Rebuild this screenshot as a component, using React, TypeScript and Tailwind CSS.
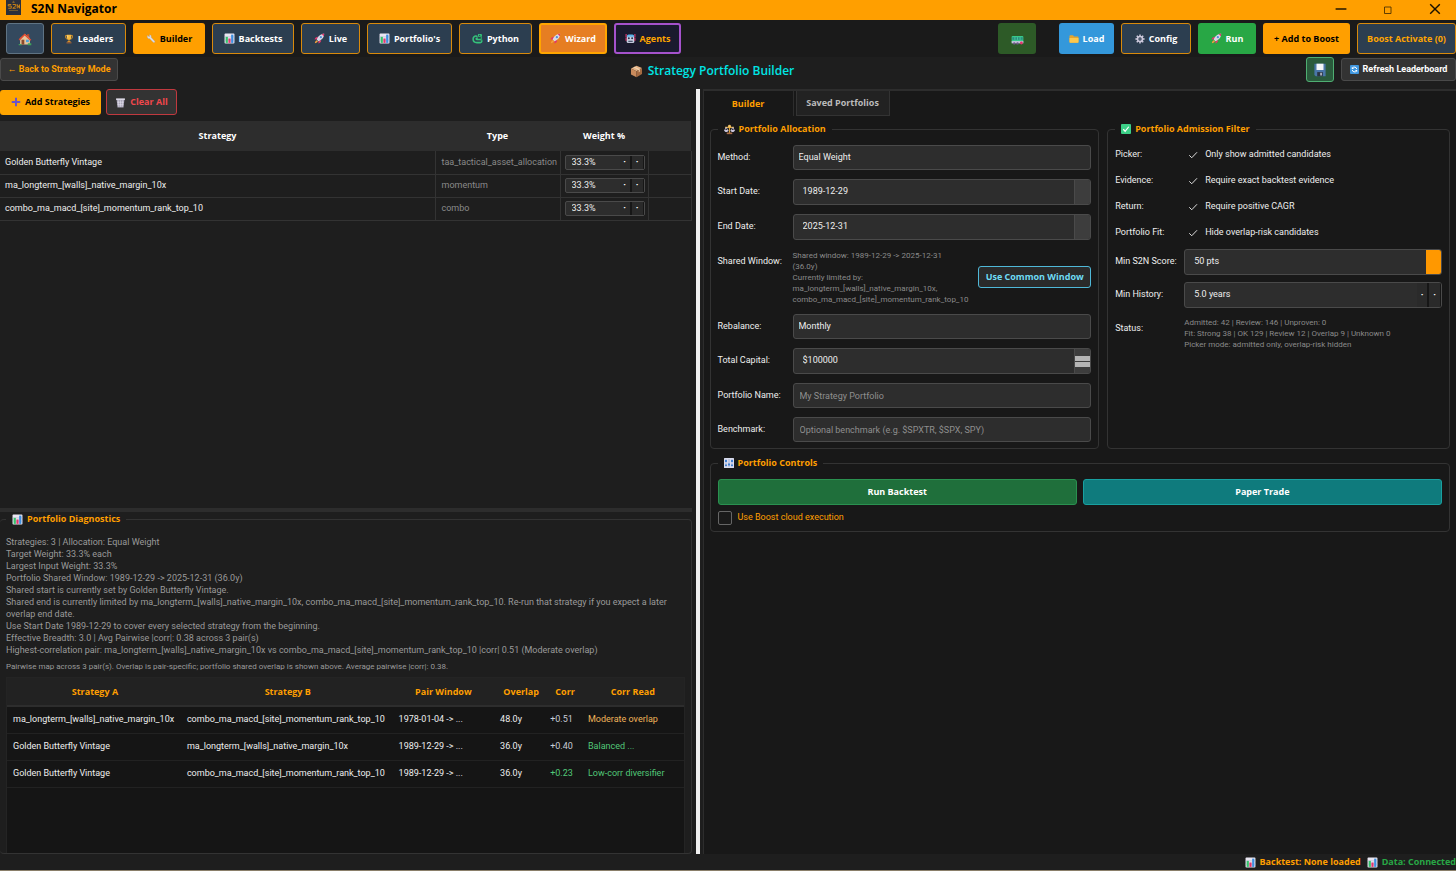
import React, { useState } from "react";
import clsx from "clsx";

interface IIcon {
    className?: string;
}

const Svg = ({ className = "size-[11px]", children }: { className?: string; children: React.ReactNode }) => (
    <svg viewBox="0 0 20 20" className={clsx("shrink-0", className)} fill="none" aria-hidden="true">
        {children}
    </svg>
);

const LogoIcon = () => (
    <Svg className="h-[15px] w-[15px]">
        <rect width="20" height="20" fill="#2b2f3a" />
        <path d="M3 6h4M3 6v2h4v3H3M9 6h4v2l-4 3h4M15 11V6l3 5V6" stroke="#c98317" strokeWidth="1.3" />
        <path d="M10 1v3M8 3h4M4 14h12" stroke="#8b6a2c" />
    </Svg>
);

const HouseIcon = () => (
    <Svg className="size-[14px]">
        <path d="M13 3h3v5h-3z" fill="#b4472f" />
        <path d="M3 9l7-6 7 6v9H3z" fill="#e8c49a" />
        <path d="M1 10.500L9.500 2l9.500 9-1.500 1.500L9.500 5 2.500 12z" fill="#e0492f" />
        <path d="M5 11h4v7H5z" fill="#8a4b2c" />
        <path d="M11.500 11h4v3.500h-4z" fill="#4aa3e0" />
        <path d="M1 17h4v2H1zM14 16h5v3h-5z" fill="#3fa35b" />
    </Svg>
);

const TrophyIcon = () => (
    <Svg className="size-[10px]">
        <path d="M3 3h14v3c0 3-2 4-4 4H7C5 10 3 9 3 6z" stroke="#c98a2a" strokeWidth="1.800" />
        <path d="M5.500 1.500h9V7c0 3-2 5-4.500 5S5.500 10 5.500 7z" fill="#f5b93d" />
        <path d="M9 11h2v3h2v2H7v-2h2z" fill="#d9902a" />
        <path d="M5 16h10v3H5z" fill="#8a5a3a" />
        <path d="M7.500 3v4" stroke="#ffe3a0" strokeWidth="1.500" />
    </Svg>
);

const WrenchIcon = () => (
    <Svg className="size-[10px]">
        <path
            d="M3 2.500l3 3 1.500-1-1-3c2-.5 4 1 4 3.500l-.3 1.300 7.300 8c1 1.700-1.200 3.700-2.700 2.500L7 9.200C4 9.700 1.500 7 3 2.500z"
            fill="#dcdde6"
            stroke="#9a9dac"
            strokeWidth=".6"
        />
    </Svg>
);

const ChartIcon = () => (
    <Svg>
        <rect x="1" y="1" width="18" height="18" rx="1.500" fill="#e9e6f2" />
        <path d="M1 7h18M1 13h18" stroke="#b8b2cc" />
        <path d="M3 7h4v11H3z" fill="#35c26b" />
        <path d="M8 10h4v8H8z" fill="#e2366d" />
        <path d="M13 3h4v15h-4z" fill="#3d8fe0" />
    </Svg>
);

const RocketIcon = () => (
    <Svg>
        <path d="M7 7C4 7 2 9 1 12l5-.5zM13 13c0 3-2 5-5 6l.5-5z" fill="#e2366d" />
        <path d="M5 13c-2 .5-3 3-3.500 5.500C4 18 6.500 17 7 15z" fill="#f5a13d" />
        <path d="M5 12C7 6 12 1.500 18.500 1.500 18.500 8 14 13 8 15z" fill="#d9d7e6" />
        <path d="M14 2.200c1.500-.5 3-.7 4.500-.7 0 1.500-.2 3-.7 4.500z" fill="#e2366d" />
        <circle cx="12.500" cy="7.500" r="2" fill="#4b8fd6" />
    </Svg>
);

const SnakeIcon = () => (
    <Svg>
        <path
            d="M9 6C5 4.500 2 7 2 11c0 4 3 6.500 7 6.500h6c3.500 0 4-5 .5-5.500H9.500c-2.500 0-2.500-3 0-3"
            stroke="#35c27b"
            strokeWidth="2.800"
            strokeLinecap="round"
        />
        <path d="M11 2h5c3 0 3 5 0 5h-5z" fill="#35c27b" />
        <circle cx="14" cy="4" r="1" fill="#112233" />
        <path d="M17 5v9" stroke="#2a9d63" strokeWidth="2.400" />
    </Svg>
);

const RobotIcon = () => (
    <Svg>
        <path d="M2 2v6M18 2v6" stroke="#e2366d" strokeWidth="2" />
        <rect x="3.500" y="2.500" width="13" height="7" rx="3" fill="#5db5ea" />
        <rect x="3" y="7" width="14" height="11" rx="2" fill="#c9cfe2" />
        <path d="M1 9h2v5H1zM17 9h2v5h-2z" fill="#e2366d" />
        <circle cx="7" cy="9.500" r="1.800" fill="#22304d" />
        <circle cx="13" cy="9.500" r="1.800" fill="#22304d" />
        <path d="M6 14h8v2.500H6z" fill="#4a5672" />
    </Svg>
);

const BusIcon = () => (
    <Svg className="size-[13px]">
        <rect x="1" y="6" width="18" height="11" rx="1.500" fill="#37c98b" />
        <path d="M2 8h16v4H2z" fill="#2a8f80" />
        <path d="M6 8v4M10 8v4M14 8v4" stroke="#59e3ab" />
        <path d="M1 14h18v3.500H1z" fill="#c8c3dd" />
        <circle cx="5" cy="17.500" r="1.800" fill="#6e5a8c" />
        <circle cx="10" cy="17.500" r="1.800" fill="#6e5a8c" />
        <circle cx="16" cy="17" r="2.200" fill="#e2366d" />
    </Svg>
);

const FolderIcon = () => (
    <Svg className="size-[10px]">
        <path d="M1 4c0-1 .5-1.500 1.500-1.500H8l2 2.500h7.500c1 0 1.500.5 1.500 1.500V16c0 1-.5 1.500-1.500 1.500h-15C1.500 17.500 1 17 1 16z" fill="#e5a52e" />
        <path d="M1 8h18v8c0 1-.5 1.500-1.500 1.500h-15C1.500 17.500 1 17 1 16z" fill="#fcc84e" />
    </Svg>
);

const GearIcon = () => (
    <Svg className="size-[10px]">
        <circle cx="10" cy="10" r="5" stroke="#cdc9dc" strokeWidth="3.400" />
        <path
            d="M10 .8v4M10 15.200v4M.8 10h4M15.200 10h4M3.500 3.500l2.800 2.800M13.700 13.700l2.800 2.800M16.500 3.500l-2.800 2.800M6.300 13.700l-2.800 2.800"
            stroke="#cdc9dc"
            strokeWidth="3"
        />
        <circle cx="10" cy="10" r="1.500" fill="#8b86a3" />
    </Svg>
);

const FloppyIcon = () => (
    <Svg className="size-[14px]">
        <path d="M2 1h16v18H4l-2-2z" fill="#4a76a8" />
        <path d="M5 1h10v9H5z" fill="#f2f4f8" />
        <path d="M6 13h8v6H6z" fill="#2b3442" />
        <path d="M10.500 14h2v4h-2z" fill="#cfd6e0" />
    </Svg>
);

const RefreshIcon = () => (
    <Svg className="size-[9px]">
        <rect width="20" height="20" rx="2" fill="#3f97e0" />
        <path d="M15 9a5.200 5.200 0 0 0-9.500-2M5 11a5.200 5.200 0 0 0 9.500 2" stroke="#fff" strokeWidth="2.200" />
        <path d="M4 4v5h5zM16 16v-5h-5z" fill="#fff" />
    </Svg>
);

const PackageIcon = () => (
    <Svg className="size-[13px]">
        <path d="M1.500 5.500L10 1l8.500 3.500-8.500 5z" fill="#e3b184" />
        <path d="M1.500 5.500L10 9.500V19l-8.500-4.500z" fill="#c98b5c" />
        <path d="M18.500 4.500V14L10 19V9.500z" fill="#a66b42" />
        <path d="M5 3.500l8.500 4V11l1.500-1V6.500l-7.500-4z" fill="#f1d6b4" />
    </Svg>
);

const ScalesIcon = () => (
    <Svg>
        <path d="M10 2v15M2 6h16" stroke="#d9a441" strokeWidth="2.200" />
        <circle cx="10" cy="4" r="2.600" fill="#f0c060" />
        <path d="M4 6l-3 6M4 6l3 6M16 6l-3 6M16 6l3 6" stroke="#c9c4dc" strokeWidth="1.600" />
        <path d="M.5 11h7.500c0 5-7.500 5-7.500 0zM12 11h7.500c0 5-7.500 5-7.500 0z" fill="#c9c4dc" />
        <path d="M5 15.500h10v3H5z" fill="#a86c48" />
    </Svg>
);

const DoneIcon = () => (
    <Svg className="size-[10px]">
        <rect width="20" height="20" rx="2" fill="#3ccf87" />
        <path d="M4.500 10.500l3.800 4 7.200-9" stroke="#fff" strokeWidth="2.400" />
    </Svg>
);

const KnobsIcon = () => (
    <Svg className="size-[10px]">
        <rect width="20" height="20" rx="1" fill="#d7dcee" />
        <path d="M4 2v16M10 2v16M16 2v16" stroke="#8d9ac2" strokeWidth="1.200" />
        <path d="M2 4h4v4H2zM8 11h4v4H8zM14 4h4v4h-4zM2 13h4v3H2zM14 13h4v3h-4z" fill="#3f7fd0" />
    </Svg>
);

const PlusIcon = () => (
    <Svg className="size-[10px]">
        <path d="M10 1.500v17M1.500 10h17" stroke="#6a54c8" strokeWidth="4" />
    </Svg>
);

const TrashIcon = () => (
    <Svg>
        <path d="M2 2.500h16v3H2z" fill="#dcd9e6" />
        <path d="M3 5.500h14L15.500 19h-11z" fill="#a9a5b8" />
        <path d="M6 6l1 12M10 6v12M14 6l-1 12M4 9.500h12M4.500 14h11" stroke="#e8e6f0" />
    </Svg>
);

const TickIcon = ({ className }: IIcon) => (
    <Svg className={className}>
        <path d="M2.500 10.500l5 5L18 4.500" stroke="#f2f2f2" strokeWidth="1.800" />
    </Svg>
);

const STRONG = "font-['Open_Sans',sans-serif] text-[9px] font-bold";

const NAV_DEFAULT = "border border-[#d98a0b] bg-[#2c3e50] text-white";

const leftNav = [
    { label: "", name: "Home", icon: <HouseIcon />, width: "w-[38px]", tone: "border border-[#5f7383] bg-[#34495e] text-white" },
    { label: "Leaders", icon: <TrophyIcon />, width: "w-[75px]", tone: NAV_DEFAULT },
    { label: "Builder", icon: <WrenchIcon />, width: "w-[72px]", tone: "bg-[#ff9f00] text-black" },
    { label: "Backtests", icon: <ChartIcon />, width: "w-[82px]", tone: NAV_DEFAULT },
    { label: "Live", icon: <RocketIcon />, width: "w-[59px]", tone: NAV_DEFAULT },
    { label: "Portfolio's", icon: <ChartIcon />, width: "w-[85px]", tone: NAV_DEFAULT },
    { label: "Python", icon: <SnakeIcon />, width: "w-[73px]", tone: NAV_DEFAULT },
    { label: "Wizard", icon: <RocketIcon />, width: "w-[68px]", tone: "border-2 border-[#ffa500] bg-[#e67e22] text-white" },
    { label: "Agents", icon: <RobotIcon />, width: "w-[67px]", tone: "border-2 border-[#a552cc] bg-[#1a1a2e] text-[#ffa500]" },
];

const rightNav = [
    { label: "Load", icon: <FolderIcon />, width: "w-[55px]", tone: "bg-[#3498db] text-white" },
    { label: "Config", icon: <GearIcon />, width: "w-[70px]", tone: NAV_DEFAULT },
    { label: "Run", icon: <RocketIcon />, width: "w-[58px]", tone: "bg-[#28a745] text-white" },
    { label: "+ Add to Boost", icon: null, width: "w-[87px]", tone: "bg-[#ff9f00] text-black" },
    { label: "Boost Activate (0)", icon: null, width: "w-[99px]", tone: "border border-[#d98a0b] bg-[#2c3e50] text-[#ffa500]" },
];

const strategies = [
    { name: "Golden Butterfly Vintage", type: "taa_tactical_asset_allocation" },
    { name: "ma_longterm_[walls]_native_margin_10x", type: "momentum" },
    { name: "combo_ma_macd_[site]_momentum_rank_top_10", type: "combo" },
];

const diagnostics = [
    "Strategies: 3 | Allocation: Equal Weight",
    "Target Weight: 33.3% each",
    "Largest Input Weight: 33.3%",
    "Portfolio Shared Window: 1989-12-29 -> 2025-12-31 (36.0y)",
    "Shared start is currently set by Golden Butterfly Vintage.",
    "Shared end is currently limited by ma_longterm_[walls]_native_margin_10x, combo_ma_macd_[site]_momentum_rank_top_10. Re-run that strategy if you expect a later overlap end date.",
    "Use Start Date 1989-12-29 to cover every selected strategy from the beginning.",
    "Effective Breadth: 3.0 | Avg Pairwise |corr|: 0.38 across 3 pair(s)",
    "Highest-correlation pair: ma_longterm_[walls]_native_margin_10x vs combo_ma_macd_[site]_momentum_rank_top_10 |corr| 0.51 (Moderate overlap)",
];

const pairs = [
    {
        a: "ma_longterm_[walls]_native_margin_10x",
        b: "combo_ma_macd_[site]_momentum_rank_top_10",
        window: "1978-01-04 -> ...",
        overlap: "48.0y",
        corr: "+0.51",
        corrTone: "text-[#c8ccd6]",
        read: "Moderate overlap",
        readTone: "text-[#f0b45a]",
    },
    {
        a: "Golden Butterfly Vintage",
        b: "ma_longterm_[walls]_native_margin_10x",
        window: "1989-12-29 -> ...",
        overlap: "36.0y",
        corr: "+0.40",
        corrTone: "text-[#c8ccd6]",
        read: "Balanced ...",
        readTone: "text-[#52c878]",
    },
    {
        a: "Golden Butterfly Vintage",
        b: "combo_ma_macd_[site]_momentum_rank_top_10",
        window: "1989-12-29 -> ...",
        overlap: "36.0y",
        corr: "+0.23",
        corrTone: "text-[#52c878]",
        read: "Low-corr diversifier",
        readTone: "text-[#52c878]",
    },
];

const filters = [
    { id: "picker", label: "Picker:", text: "Only show admitted candidates" },
    { id: "evidence", label: "Evidence:", text: "Require exact backtest evidence" },
    { id: "return", label: "Return:", text: "Require positive CAGR" },
    { id: "fit", label: "Portfolio Fit:", text: "Hide overlap-risk candidates" },
];

interface INavButton {
    label: string;
    name?: string;
    icon: React.ReactNode;
    width: string;
    tone: string;
}

const NavButton = ({ label, name, icon, width, tone }: INavButton) => (
    <button
        type="button"
        aria-label={name}
        className={clsx("flex h-[31px] shrink-0 items-center justify-center gap-1 rounded-[3px] whitespace-nowrap", STRONG, width, tone)}
    >
        {icon}
        {label && <span>{label}</span>}
    </button>
);

const GroupBox = ({ title, icon, className, children }: { title: string; icon: React.ReactNode; className?: string; children: React.ReactNode }) => (
    <fieldset className={clsx("min-w-0 rounded-[4px] border border-[#333333]", className)}>
        <legend className={clsx("flex items-center gap-1 px-1.5 leading-[14px] text-[#ff9f00]", STRONG)}>
            {icon}
            {title}
        </legend>
        {children}
    </fieldset>
);

const FIELD = "w-full min-w-0 rounded-[3px] border border-[#4a4a4a] bg-[#2d2d2d] text-[#eeeeee] outline-none";

const StepDots = ({ name }: { name: string }) => (
    <>
        <button type="button" aria-label={`Decrease ${name}`} className="w-3 shrink-0 border-r-2 border-[#161616] bg-[#2a2a2a] leading-none font-bold text-white">
            ·
        </button>
        <button type="button" aria-label={`Increase ${name}`} className="w-3 shrink-0 border-r border-[#161616] bg-[#2a2a2a] leading-none font-bold text-white">
            ·
        </button>
    </>
);

const FormRow = ({ id, label, children }: { id: string; label: string; children: React.ReactNode }) => (
    <div className="flex">
        <label htmlFor={id} className="w-[75px] shrink-0 pt-[5px] leading-[14px] text-[#eeeeee]">
            {label}
        </label>
        <div className="min-w-0 flex-1">{children}</div>
    </div>
);

const DateField = ({ id, value }: { id: string; value: string }) => (
    <div className={clsx("flex h-[26px] overflow-hidden", FIELD)}>
        <input id={id} type="text" defaultValue={value} className="min-w-0 flex-1 pl-[9px] outline-none" />
        <button type="button" aria-label="Open calendar" className="w-4 border-l border-[#4a4a4a] bg-[#3d3d3d]" />
    </div>
);

const StrategyTable = () => (
    <table className="w-full table-fixed border-collapse">
        <colgroup>
            <col />
            <col className="w-[125px]" />
            <col className="w-[88px]" />
            <col className="w-[43px]" />
        </colgroup>
        <thead>
            <tr className={clsx("h-[30px] bg-[#2d2d2d] text-white", STRONG)}>
                <th>Strategy</th>
                <th>Type</th>
                <th>Weight %</th>
                <th aria-label="Actions" />
            </tr>
        </thead>
        <tbody>
            {strategies.map(({ name, type }) => (
                <tr key={name} className="h-[23px] border-b border-[#333333]">
                    <td className="pl-[5px] text-[#eeeeee]">{name}</td>
                    <td className="border-l border-[#333333] pl-1.5 text-[#8a8a8a]">{type}</td>
                    <td className="border-l border-[#333333] pl-1">
                        <div className="flex h-[15px] w-20 overflow-hidden rounded-[2px] border border-[#4a4a4a] bg-[#2d2d2d]">
                            <input aria-label={`Weight of ${name}`} defaultValue="33.3%" className="min-w-0 flex-1 pl-1.5 text-[#eeeeee] outline-none" />
                            <StepDots name="weight" />
                        </div>
                    </td>
                    <td className="border-x border-[#333333]" />
                </tr>
            ))}
        </tbody>
    </table>
);

const PairTable = () => (
    <div className="mt-1 min-h-[176px] border border-b-0 border-[#242424] bg-[#151515]">
        <table className="w-full table-fixed border-collapse whitespace-nowrap text-[#eeeeee]">
            <colgroup>
                <col className="w-[26%]" />
                <col className="w-[31%]" />
                <col className="w-[15%]" />
                <col className="w-[8%]" />
                <col className="w-[5%]" />
                <col className="w-[15%]" />
            </colgroup>
            <thead>
                <tr className={clsx("h-7 border-b-2 border-[#2d2d2d] bg-[#222222] text-[#ff9f00]", STRONG)}>
                    <th>Strategy A</th>
                    <th>Strategy B</th>
                    <th>Pair Window</th>
                    <th>Overlap</th>
                    <th>Corr</th>
                    <th>Corr Read</th>
                </tr>
            </thead>
            <tbody>
                {pairs.map((pair) => (
                    <tr key={pair.a + pair.b} className="h-[27px] border-b border-[#222222]">
                        <td className="pl-1.5">{pair.a}</td>
                        <td className="pl-1">{pair.b}</td>
                        <td className="pl-1.5">{pair.window}</td>
                        <td className="pl-1.5">{pair.overlap}</td>
                        <td className={clsx("pl-0.5", pair.corrTone)}>{pair.corr}</td>
                        <td className={clsx("pl-1.5", pair.readTone)}>{pair.read}</td>
                    </tr>
                ))}
            </tbody>
        </table>
    </div>
);

const AllocationGroup = () => (
    <GroupBox title="Portfolio Allocation" icon={<ScalesIcon />} className="flex-[391] px-[7px] pb-1.5">
        <div className="flex flex-col gap-[9px] pt-[9px]">
            <FormRow id="method" label="Method:">
                <select id="method" className={clsx("h-[25px] appearance-none pl-[5px]", FIELD)}>
                    <option>Equal Weight</option>
                </select>
            </FormRow>
            <FormRow id="start-date" label="Start Date:">
                <DateField id="start-date" value="1989-12-29" />
            </FormRow>
            <FormRow id="end-date" label="End Date:">
                <DateField id="end-date" value="2025-12-31" />
            </FormRow>
            <FormRow id="common-window" label="Shared Window:">
                <div className="flex min-h-14 items-center justify-between gap-1">
                    <p className="text-[8px] leading-[11px] text-[#8a8a8a]">
                        Shared window: 1989-12-29 -&gt; 2025-12-31
                        <br />
                        (36.0y)
                        <br />
                        Currently limited by:
                        <br />
                        ma_longterm_[walls]_native_margin_10x,
                        <br />
                        combo_ma_macd_[site]_momentum_rank_top_10
                    </p>
                    <button
                        id="common-window"
                        type="button"
                        className={clsx("h-[22px] w-[113px] shrink-0 rounded-[3px] border border-[#4fb8d8] bg-[#2a2a2a] whitespace-nowrap text-[#6fdcf5]", STRONG)}
                    >
                        Use Common Window
                    </button>
                </div>
            </FormRow>
            <FormRow id="rebalance" label="Rebalance:">
                <select id="rebalance" className={clsx("h-[25px] appearance-none pl-[5px]", FIELD)}>
                    <option>Monthly</option>
                </select>
            </FormRow>
            <FormRow id="capital" label="Total Capital:">
                <div className={clsx("flex h-[26px] overflow-hidden", FIELD)}>
                    <input id="capital" defaultValue="$100000" className="min-w-0 flex-1 pl-[9px] outline-none" />
                    <div className="flex w-4 flex-col justify-center gap-px border-l border-[#4a4a4a] bg-[#3d3d3d]">
                        <button type="button" aria-label="Increase capital" className="h-[5px] bg-[#b5b5b5]" />
                        <button type="button" aria-label="Decrease capital" className="h-[5px] bg-[#b5b5b5]" />
                    </div>
                </div>
            </FormRow>
            <FormRow id="portfolio-name" label="Portfolio Name:">
                <input id="portfolio-name" placeholder="My Strategy Portfolio" className={clsx("block h-[25px] pl-1.5 placeholder:text-[#8f8f8f]", FIELD)} />
            </FormRow>
            <FormRow id="benchmark" label="Benchmark:">
                <input id="benchmark" placeholder="Optional benchmark (e.g. $SPXTR, $SPX, SPY)" className={clsx("block h-[25px] pl-1.5 placeholder:text-[#8f8f8f]", FIELD)} />
            </FormRow>
        </div>
    </GroupBox>
);

const AdmissionGroup = () => (
    <GroupBox title="Portfolio Admission Filter" icon={<DoneIcon />} className="flex-[342] px-[7px]">
        <div className="flex flex-col pt-1.5">
            {filters.map(({ id, label, text }) => (
                <div key={id} className="flex h-[26px] items-center text-[#eeeeee]">
                    <span className="w-[69px] shrink-0">{label}</span>
                    <label className="flex items-center gap-[7px] pl-1">
                        <span className="grid size-[10px]">
                            <input type="checkbox" defaultChecked className="peer size-[10px] appearance-none [grid-area:1/1]" />
                            <TickIcon className="pointer-events-none invisible size-[10px] [grid-area:1/1] peer-checked:visible" />
                        </span>
                        {text}
                    </label>
                </div>
            ))}
            <div className="mt-[3px] flex">
                <label htmlFor="min-score" className="w-[69px] shrink-0 pt-[5px] leading-[14px] text-[#eeeeee]">
                    Min S2N Score:
                </label>
                <div className={clsx("flex h-[26px] overflow-hidden", FIELD)}>
                    <input id="min-score" defaultValue="50 pts" className="min-w-0 flex-1 pl-[9px] outline-none" />
                    <button type="button" aria-label="Change score" className="w-[15px] bg-[#ff9800]" />
                </div>
            </div>
            <div className="mt-[7px] flex">
                <label htmlFor="min-history" className="w-[69px] shrink-0 pt-[5px] leading-[14px] text-[#eeeeee]">
                    Min History:
                </label>
                <div className={clsx("flex h-[26px] overflow-hidden", FIELD)}>
                    <input id="min-history" defaultValue="5.0 years" className="min-w-0 flex-1 pl-[9px] outline-none" />
                    <StepDots name="history" />
                </div>
            </div>
            <div className="mt-[9px] flex">
                <span className="w-[69px] shrink-0 pt-1 leading-[14px] text-[#eeeeee]">Status:</span>
                <p className="text-[8px] leading-[11px] text-[#8a8a8a]">
                    Admitted: 42 | Review: 146 | Unproven: 0
                    <br />
                    Fit: Strong 38 | OK 129 | Review 12 | Overlap 9 | Unknown 0
                    <br />
                    Picker mode: admitted only, overlap-risk hidden
                </p>
            </div>
        </div>
    </GroupBox>
);

const App = () => {
    const [boost, setBoost] = useState(false);

    return (
        <div className="flex min-h-screen flex-col bg-[#1e1e1e] font-['Roboto','Open_Sans',sans-serif] text-[9px]">
            <header className="flex h-5 items-start bg-[#ff9f00] pl-1.5 text-black">
                <LogoIcon />
                <h1 className="ml-2.5 flex-1 font-['Open_Sans',sans-serif] text-[12px] leading-[18px] font-bold">S2N Navigator</h1>
                <div className="flex gap-9 pt-[3px] pr-[15px]">
                    <button type="button" aria-label="Minimize">
                        <Svg className="size-[12px]">
                            <path d="M1 10h18" stroke="#1a1200" strokeWidth="2.400" />
                        </Svg>
                    </button>
                    <button type="button" aria-label="Maximize">
                        <Svg className="size-[10px]">
                            <path d="M3 6h13v13H3z" stroke="#3a2600" strokeWidth="1.600" />
                        </Svg>
                    </button>
                    <button type="button" aria-label="Close">
                        <Svg className="size-[12px]">
                            <path d="M2 2l16 16M18 2L2 18" stroke="#1a1200" strokeWidth="2.400" />
                        </Svg>
                    </button>
                </div>
            </header>

            <nav className="flex h-[37px] items-center gap-[7px] bg-[#1a1a1a] pl-1.5">
                {leftNav.map((item) => (
                    <NavButton key={item.label} {...item} />
                ))}
                <div className="flex-1" />
                <NavButton label="" name="Transit" icon={<BusIcon />} width="w-[38px] mr-4" tone="bg-[#2d5a27]" />
                {rightNav.map((item) => (
                    <NavButton key={item.label} {...item} />
                ))}
            </nav>

            <div className="flex h-8 items-start justify-between">
                <button
                    type="button"
                    className="mt-px h-[23px] w-[118px] rounded-[3px] border border-[#4a4a4a] bg-[#333333] text-[9px] font-bold whitespace-nowrap text-[#ff9f00]"
                >
                    ← Back to Strategy Mode
                </button>
                <h2 className="flex items-center gap-[5px] pt-1 font-['Open_Sans',sans-serif] text-[12px] leading-5 font-semibold text-[#00e5e5]">
                    <PackageIcon />
                    Strategy Portfolio Builder
                </h2>
                <div className="flex items-start justify-end gap-[7px]">
                    <button type="button" aria-label="Save" className="flex h-[25px] w-7 items-center justify-center rounded-[3px] border border-[#4fae72] bg-[#2a5a3c]">
                        <FloppyIcon />
                    </button>
                    <button
                        type="button"
                        className="mt-px flex h-[23px] w-[115px] items-center justify-center gap-1 rounded-[3px] border border-[#4a4a4a] bg-[#333333] text-[9px] font-bold whitespace-nowrap text-white"
                    >
                        <RefreshIcon />
                        Refresh Leaderboard
                    </button>
                </div>
            </div>

            <main className="flex flex-1">
                <section className="flex min-w-0 flex-[692] flex-col">
                    <div className="flex-1">
                        <div className={clsx("flex items-center gap-[5px] pb-1.5", STRONG)}>
                            <button type="button" className="flex h-[25px] w-[101px] items-center justify-center gap-1 rounded-[3px] bg-[#ffa500] whitespace-nowrap text-black">
                                <PlusIcon />
                                Add Strategies
                            </button>
                            <button
                                type="button"
                                className="flex h-[26px] w-[71px] items-center justify-center gap-1 rounded-[3px] border border-[#c0393f] bg-[#333333] whitespace-nowrap text-[#f0474c]"
                            >
                                <TrashIcon />
                                Clear All
                            </button>
                        </div>
                        <StrategyTable />
                    </div>
                    <div className="h-1 bg-[#2d2d2d]" />
                    <GroupBox title="Portfolio Diagnostics" icon={<ChartIcon />} className="border-l-0 px-1.5">
                        <div className="pt-2.5 leading-3 text-[#9a9a9a]">
                            {diagnostics.map((line) => (
                                <p key={line}>{line}</p>
                            ))}
                            <p className="mt-[5px] text-[8px]">
                                Pairwise map across 3 pair(s). Overlap is pair-specific; portfolio shared overlap is shown above. Average pairwise |corr|: 0.38.
                            </p>
                        </div>
                        <PairTable />
                    </GroupBox>
                </section>

                <div className="ml-1 w-1 bg-[#f0f0f0]" />

                <section className="ml-[3px] min-w-0 flex-[753] border-t-2 border-l border-[#2d2d2d] bg-[#181818]">
                    <div role="tablist" className={clsx("flex h-[25px] gap-0.5", STRONG)}>
                        <button type="button" role="tab" aria-selected="true" className="w-[90px] border-r border-[#2d2d2d] text-[#ff9f00]">
                            Builder
                        </button>
                        <button type="button" role="tab" aria-selected="false" className="w-[94px] border border-t-0 border-[#333333] bg-[#222222] text-[#bbbbbb]">
                            Saved Portfolios
                        </button>
                    </div>
                    <div className="flex flex-col gap-[7px] px-1.5 pt-1.5">
                        <div className="flex gap-2">
                            <AllocationGroup />
                            <AdmissionGroup />
                        </div>
                        <GroupBox title="Portfolio Controls" icon={<KnobsIcon />} className="px-[7px] pb-1.5">
                            <div className={clsx("flex gap-1.5 pt-[9px] text-white", STRONG)}>
                                <button type="button" className="h-[26px] flex-1 rounded-[3px] border border-[#2a9150] bg-[#1f6f3b]">
                                    Run Backtest
                                </button>
                                <button type="button" className="h-[26px] flex-1 rounded-[3px] border border-[#18a0a0] bg-[#0f7b7d]">
                                    Paper Trade
                                </button>
                            </div>
                            <label className="mt-1.5 flex items-center gap-1.5 text-[#ff9f00]">
                                <input
                                    type="checkbox"
                                    checked={boost}
                                    onChange={(e) => setBoost(e.target.checked)}
                                    className="size-[14px] appearance-none rounded-[2px] border border-[#666666] bg-[#1a1a1a] checked:bg-[#ff9f00]"
                                />
                                Use Boost cloud execution
                            </label>
                        </GroupBox>
                    </div>
                </section>
            </main>

            <footer className={clsx("flex h-[17px] items-center justify-end gap-1.5 border-b border-[#8a7f6a] bg-[#1e1e1e]", STRONG)}>
                <span className="flex items-center gap-1 text-[#ff9f00]">
                    <ChartIcon />
                    Backtest: None loaded
                </span>
                <span className="flex items-center gap-1 text-[#28a745]">
                    <ChartIcon />
                    Data: Connected
                </span>
            </footer>
        </div>
    );
};

export default App;
